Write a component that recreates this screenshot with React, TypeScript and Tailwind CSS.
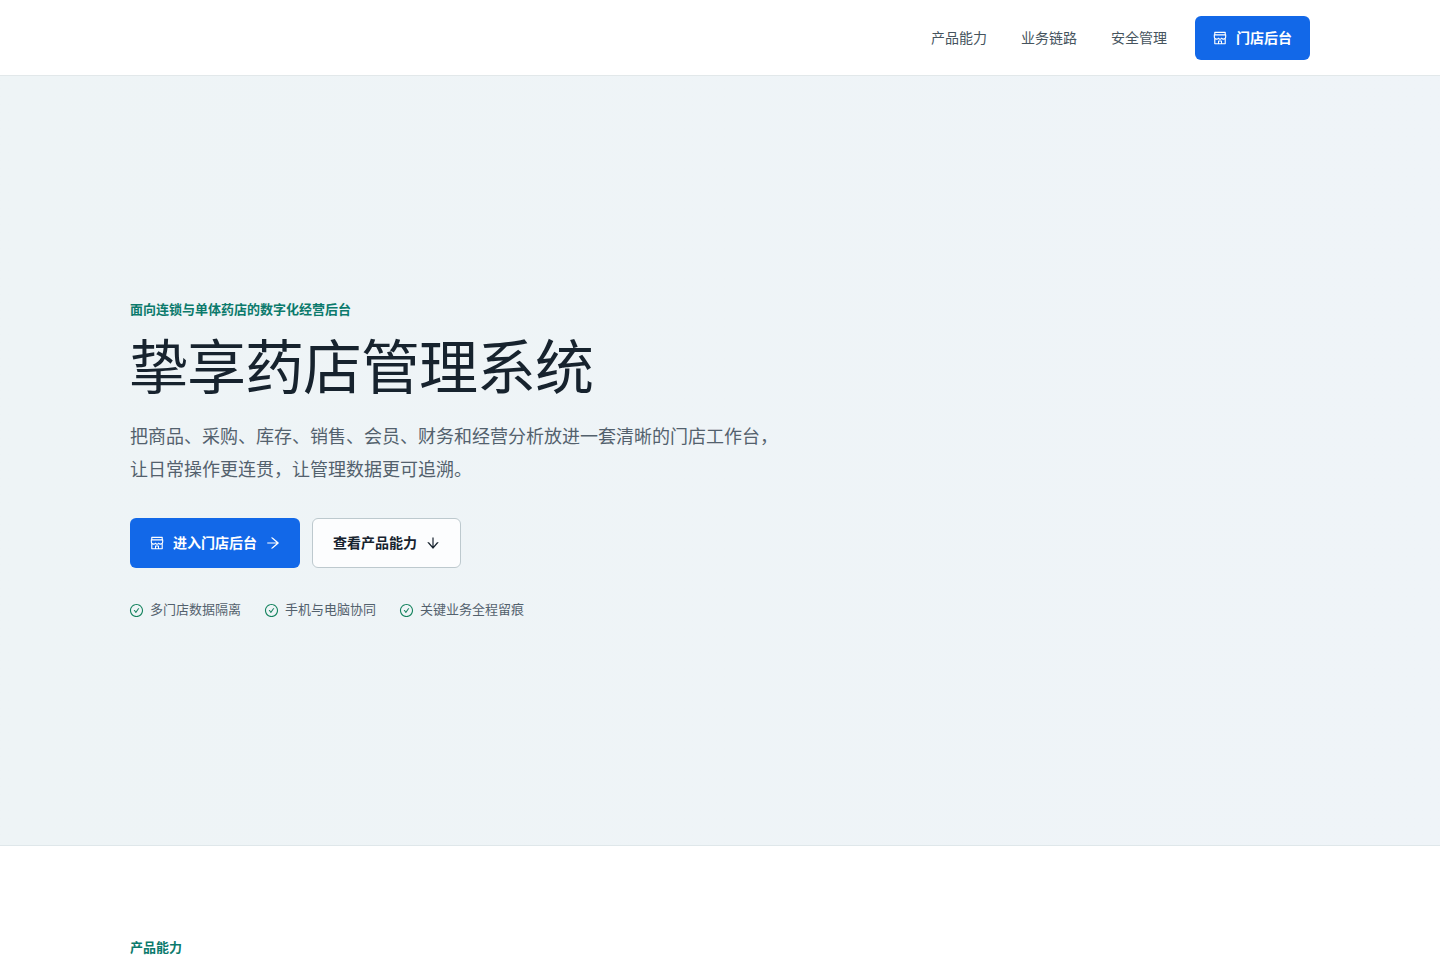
import {
  AiOutlineArrowDown,
  AiOutlineArrowRight,
  AiOutlineCheckCircle,
  AiOutlineShop,
} from 'react-icons/ai'

const navLinks = [
  { label: '产品能力', href: '#features' },
  { label: '业务链路', href: '#workflow' },
  { label: '安全管理', href: '#security' },
]

const highlights = ['多门店数据隔离', '手机与电脑协同', '关键业务全程留痕']

const Header = () => (
  <header className="h-[76px] bg-white border-b border-[#e2e8ea]">
    <div className="w-[1180px] h-full mx-auto flex items-center justify-end">
      <nav className="flex items-center gap-[34px] mr-7">
        {navLinks.map((link) => (
          <a key={link.href} href={link.href} className="pb-0.5 text-sm text-[#46545e]">
            {link.label}
          </a>
        ))}
      </nav>
      <a
        href="#admin"
        className="w-[115px] h-11 flex items-center justify-center gap-2 rounded-md bg-[#1268e8] text-sm font-bold text-white"
      >
        <AiOutlineShop className="size-4 -ml-px shrink-0" />
        <span className="pb-0.5">门店后台</span>
      </a>
    </div>
  </header>
)

const Hero = () => (
  <section className="h-[770px] bg-linear-to-r from-[#eef4f6] to-[#eff4f8] border-b border-[#dfe7ea]">
    <div className="w-[1180px] mx-auto pt-[223px]">
      <p className="text-[13px] leading-5 font-bold text-[#0b7a6c]">面向连锁与单体药店的数字化经营后台</p>
      <h1 className="mt-[11px] -ml-px text-[59px] leading-[68px] tracking-[-1px] text-[#17232e]">挚享药店管理系统</h1>
      <p className="mt-[21px] text-lg leading-[33px] text-[#53616d]">
        把商品、采购、库存、销售、会员、财务和经营分析放进一套清晰的门店工作台，
        <br />
        让日常操作更连贯，让管理数据更可追溯。
      </p>
      <div className="mt-[33px] flex gap-3">
        <a
          href="#admin"
          className="w-[170px] h-[50px] flex items-center justify-center gap-2 rounded-md bg-[#1268e8] text-sm font-bold text-white"
        >
          <AiOutlineShop className="size-4 shrink-0" />
          <span className="pb-0.5">进入门店后台</span>
          <AiOutlineArrowRight className="size-4 shrink-0" />
        </a>
        <a
          href="#features"
          className="w-[149px] h-[50px] flex items-center justify-center gap-2 rounded-md border border-[#bdc9ce] bg-[#fcfdfe] text-sm font-bold text-[#17232e]"
        >
          <span className="pb-0.5">查看产品能力</span>
          <AiOutlineArrowDown className="size-4 -mr-px shrink-0" />
        </a>
      </div>
      <ul className="mt-[31px] flex gap-6 text-[13px] leading-5 text-[#53616d]">
        {highlights.map((item) => (
          <li key={item} className="flex items-center gap-[7px]">
            <AiOutlineCheckCircle className="size-[15px] -mx-px shrink-0 text-[#16845f]" />
            <span className="pb-0.5">{item}</span>
          </li>
        ))}
      </ul>
    </div>
  </section>
)

const App = () => (
  <div className="h-[960px] overflow-hidden bg-white font-['Noto_Sans_CJK_SC',sans-serif]">
    <Header />
    <Hero />
    <section id="features" className="w-[1180px] mx-auto pt-[91px]">
      <p className="text-[13px] leading-5 font-bold text-[#0b7a6c]">产品能力</p>
    </section>
  </div>
)

export default App
